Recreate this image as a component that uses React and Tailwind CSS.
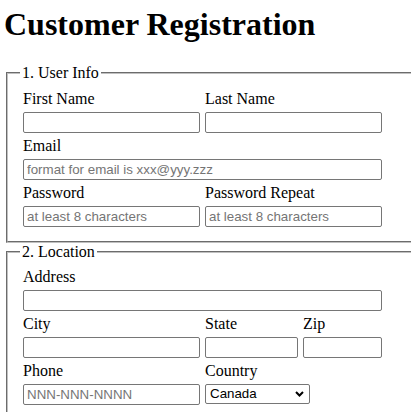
import React from 'react';

const inputCls =
  "block h-[21px] border border-[#767676] rounded-[2px] bg-white px-[3px] font-['Liberation_Sans',Arial,sans-serif] text-[13.33px] text-black placeholder:text-[#757575] outline-none";

function Field({ label, width, placeholder }) {
  return (
    <div className="flex flex-col" style={{ width }}>
      <label className="h-[22px] leading-[18px]">{label}</label>
      <input type="text" placeholder={placeholder} className={inputCls + ' w-full mb-[4px]'} />
    </div>
  );
}

function Box({ title, children, top, bottom }) {
  return (
    <fieldset className={'mx-[2px] w-[440px] border-2 [border-style:groove] border-[#c0c0c0] px-[12px] ' + bottom}>
      <legend className="px-[2px] text-[16px] leading-[18px]">{title}</legend>
      <div className={'pl-[3px] flex flex-col ' + top}>{children}</div>
    </fieldset>
  );
}

export default function App() {
  return (
    <div className="h-[412px] overflow-hidden bg-white pl-[4px] pt-[6px] font-['Liberation_Serif','Times_New_Roman',serif] text-[16px] text-black">
      <h1 className="text-[32px] font-bold leading-[37px] mb-[21px]">Customer Registration</h1>

      <Box title="1. User Info" top="pt-[8px]" bottom="pb-[10px]">
        <div className="flex gap-[5px]">
          <Field label="First Name" width={177} />
          <Field label="Last Name" width={177} />
        </div>
        <Field label="Email" width={359} placeholder="format for email is xxx@yyy.zzz" />
        <div className="flex gap-[5px]">
          <Field label="Password" width={177} placeholder="at least 8 characters" />
          <Field label="Password Repeat" width={177} placeholder="at least 8 characters" />
        </div>
      </Box>

      <Box title="2. Location" top="pt-[7px]" bottom="pb-[60px]">
        <Field label="Address" width={359} />
        <div className="flex gap-[5px]">
          <Field label="City" width={177} />
          <Field label="State" width={93} />
          <Field label="Zip" width={79} />
        </div>
        <div className="flex gap-[5px]">
          <Field label="Phone" width={177} placeholder="NNN-NNN-NNNN" />
          <div className="flex flex-col w-[177px]">
            <label className="h-[22px] leading-[18px]">Country</label>
            <div className="relative w-[105px] h-[20px]">
              <select
                defaultValue="Canada"
                className="appearance-none block w-full h-full border border-[#767676] rounded-[2px] bg-white pl-[4px] font-['Liberation_Sans',Arial,sans-serif] text-[13.33px] leading-[18px] text-black"
              >
                <option>Canada</option>
                <option>United States</option>
                <option>Mexico</option>
              </select>
              <svg
                className="pointer-events-none absolute right-[6px] top-[7px]"
                width="9"
                height="6"
                viewBox="0 0 9 6"
              >
                <path d="M1 1 L4.5 4.5 L8 1" fill="none" stroke="#000" strokeWidth="2" />
              </svg>
            </div>
          </div>
        </div>
      </Box>
    </div>
  );
}
